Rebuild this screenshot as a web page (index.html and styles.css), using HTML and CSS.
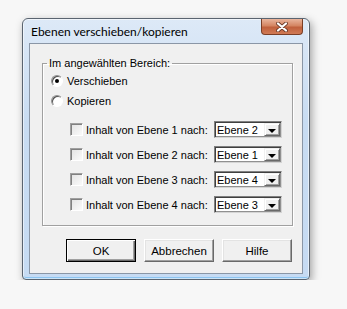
FILE: index.html
```html
<!DOCTYPE html>
<html lang="de">
<head>
    <meta charset="UTF-8">
    <title>Ebenen verschieben/kopieren</title>
    <link rel="stylesheet" href="styles.css">
</head>
<body>
    <div class="window">
        <div class="titlebar">
            <span class="title">Ebenen verschieben/kopieren</span>
            <span class="close">
                <svg width="12" height="10" viewBox="0 0 12 10">
                    <path d="M2 1.5 L10 8.5 M10 1.5 L2 8.5" stroke="#6b3a28" stroke-width="3.8" stroke-linecap="round"/>
                    <path d="M2 1.5 L10 8.5 M10 1.5 L2 8.5" stroke="#fff" stroke-width="2.2" stroke-linecap="round"/>
                </svg>
            </span>
        </div>
        <div class="client">
            <fieldset class="group">
                <legend>Im angewählten Bereich:</legend>
                <div class="option first"><span class="radio checked"></span>Verschieben</div>
                <div class="option"><span class="radio"></span>Kopieren</div>

                <div class="layer-row first-layer">
                    <span class="check"></span>
                    <span class="layer-label">Inhalt von Ebene 1 nach:</span>
                    <span class="combo"><span class="combo-value">Ebene 2</span><span class="combo-arrow"></span></span>
                </div>
                <div class="layer-row">
                    <span class="check"></span>
                    <span class="layer-label">Inhalt von Ebene 2 nach:</span>
                    <span class="combo"><span class="combo-value">Ebene 1</span><span class="combo-arrow"></span></span>
                </div>
                <div class="layer-row">
                    <span class="check"></span>
                    <span class="layer-label">Inhalt von Ebene 3 nach:</span>
                    <span class="combo"><span class="combo-value">Ebene 4</span><span class="combo-arrow"></span></span>
                </div>
                <div class="layer-row">
                    <span class="check"></span>
                    <span class="layer-label">Inhalt von Ebene 4 nach:</span>
                    <span class="combo"><span class="combo-value">Ebene 3</span><span class="combo-arrow"></span></span>
                </div>
            </fieldset>

            <div class="buttons">
                <button class="btn default">OK</button>
                <button class="btn">Abbrechen</button>
                <button class="btn">Hilfe</button>
            </div>
        </div>
    </div>
</body>
</html>
```

FILE: styles.css
```css
body {
    margin: 0;
    padding: 18px 0 0 22px;
    background-color: #f7f7f7;
    font-family: "Liberation Sans", Arial, sans-serif;
    font-size: 11px;
    color: #000;
}
.window {
    box-sizing: border-box;
    width: 288px;
    height: 262px;
    border: 1px solid #5a6470;
    border-radius: 6px 6px 4px 4px;
    background: linear-gradient(#dde9f7, #c8dcf2 40%, #c6dbf3);
    box-shadow: inset 0 0 0 1px rgba(255, 255, 255, 0.55), inset 0 -2px 0 #8cc4f0, 2px 3px 9px rgba(0, 0, 0, 0.35);
}
.titlebar {
    display: flex;
    align-items: flex-start;
    height: 24px;
    padding-left: 8px;
}
.title {
    margin-top: 5px;
    font-family: Lato, "Noto Sans", sans-serif;
    font-size: 12px;
    line-height: 16px;
    color: #000;
}
.close {
    display: flex;
    align-items: center;
    justify-content: center;
    box-sizing: border-box;
    width: 42px;
    height: 16px;
    margin-left: auto;
    margin-right: 6px;
    border: 1px solid #7a3e26;
    border-top: none;
    border-radius: 0 0 4px 4px;
    background: linear-gradient(#e9b59d, #d48562 45%, #c0603c 55%, #d07a55);
}
.client {
    box-sizing: border-box;
    height: 231px;
    margin: 0 6px;
    padding: 0 9px 10px 12px;
    border: 1px solid #8a96a6;
    background-color: #f0f0f0;
}
.group {
    margin: 13px 0 0 0;
    padding: 3px 0 12px 0;
    border: 1px solid #a0a0a0;
    box-shadow: inset 1px 1px 0 #fff, 1px 1px 0 #fff;
}
.group legend {
    margin-left: 4px;
    padding: 0 2px;
    line-height: 13px;
}
.option {
    display: flex;
    align-items: center;
    height: 16px;
    margin-top: 4px;
    padding-left: 8px;
}
.option.first {
    margin-top: 0;
}
.radio {
    position: relative;
    box-sizing: border-box;
    width: 12px;
    height: 12px;
    margin-right: 4px;
    border: 1px solid;
    border-color: #909090 #fff #fff #909090;
    border-radius: 50%;
    background: #fff;
    box-shadow: inset 1px 1px 0 #505050;
}
.radio.checked::after {
    content: "";
    position: absolute;
    left: 3px;
    top: 3px;
    width: 4px;
    height: 4px;
    border-radius: 50%;
    background: #000;
}
.layer-row {
    display: flex;
    align-items: center;
    height: 17px;
    margin-top: 8px;
    padding-left: 27px;
}
.layer-row.first-layer {
    margin-top: 12px;
}
.check {
    box-sizing: border-box;
    width: 13px;
    height: 13px;
    margin-right: 3px;
    border: 1px solid;
    border-color: #a0a0a0 #fff #fff #a0a0a0;
    background: linear-gradient(135deg, #e2e2e2, #fafafa);
    box-shadow: inset 1px 1px 0 #808080;
}
.layer-label {
    width: 128px;
}
.combo {
    display: flex;
    box-sizing: border-box;
    width: 68px;
    height: 17px;
    border: 1px solid;
    border-color: #808080 #d4d4d4 #d4d4d4 #808080;
    background: #fff;
    box-shadow: inset 1px 1px 0 #404040, inset -1px -1px 0 #909090;
}
.combo-value {
    flex: 1;
    padding: 1px 0 0 2px;
    font-size: 11px;
    line-height: 14px;
}
.combo-arrow {
    position: relative;
    box-sizing: border-box;
    width: 16px;
    margin: 1px 1px 1px 0;
    border: 1px solid;
    border-color: #f0f0f0 #696969 #696969 #f0f0f0;
    background: #f0f0f0;
    box-shadow: inset 1px 1px 0 #fff, inset -1px -1px 0 #a0a0a0;
}
.combo-arrow::after {
    content: "";
    position: absolute;
    left: 3px;
    top: 5px;
    border-left: 4px solid transparent;
    border-right: 4px solid transparent;
    border-top: 4px solid #000;
}
.buttons {
    display: flex;
    justify-content: flex-end;
    gap: 8px;
    margin-top: 13px;
    padding-right: 1px;
}
.btn {
    box-sizing: border-box;
    width: 70px;
    height: 23px;
    padding: 0;
    font-family: "Liberation Sans", Arial, sans-serif;
    font-size: 11.5px;
    color: #000;
    border: 1px solid;
    border-color: #fff #696969 #696969 #fff;
    background: #f0f0f0;
    box-shadow: inset -1px -1px 0 #a0a0a0, inset 1px 1px 0 #e3e3e3;
}
.btn.default {
    border: 1px solid #000;
    box-shadow: inset 1px 1px 0 #fff, inset -1px -1px 0 #696969, inset -2px -2px 0 #a0a0a0;
}
```
